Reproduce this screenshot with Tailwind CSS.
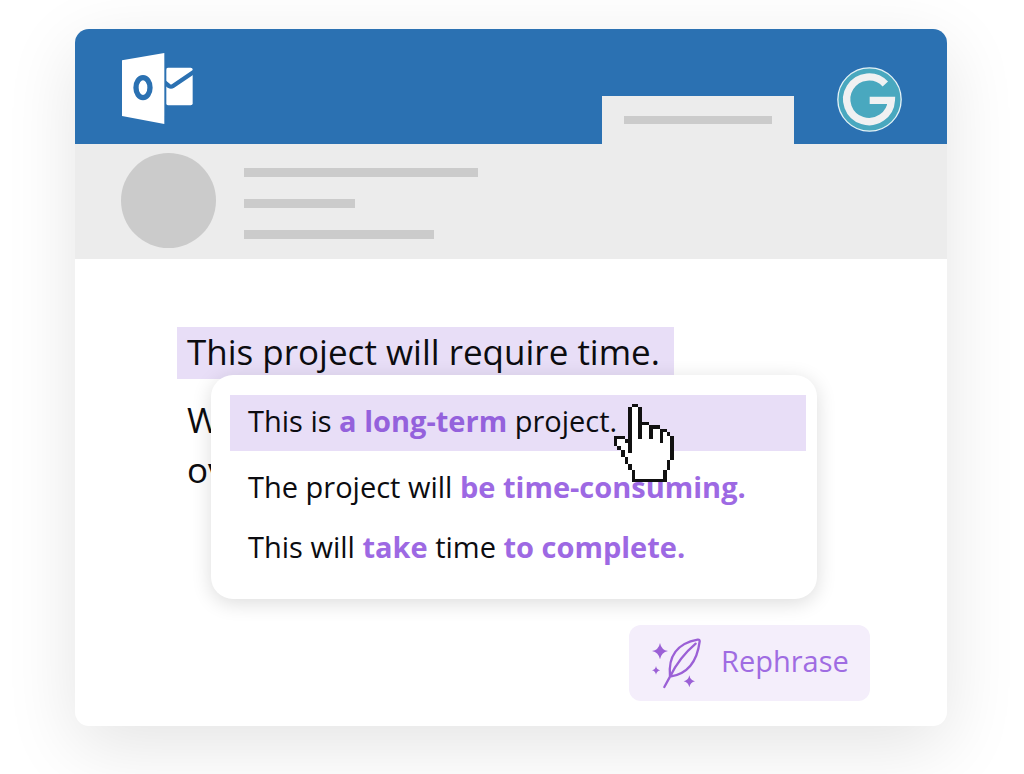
<!DOCTYPE html>
<html lang="en">
<head>
    <meta charset="UTF-8">
    <meta name="viewport" content="width=device-width, initial-scale=1.0">
    <title>Rephrase in Outlook</title>
    <script src="https://cdn.jsdelivr.net/npm/@tailwindcss/browser@4"></script>
</head>
<body class="min-h-screen overflow-x-hidden bg-white font-['Open_Sans','Noto_Sans',sans-serif] text-[#0c0c10]">
    <main class="pt-[29px] pr-[77px] pb-12 pl-[75px]">
        <div class="overflow-hidden rounded-[14px] bg-white shadow-[0_20px_72px_rgba(0,0,0,0.11)]">

            <!-- Title bar -->
            <header class="flex h-[115px] items-end bg-[#2b71b2] pr-[45px] pl-[47px]">
                <svg class="mb-5 h-[71px] w-[71px]" viewBox="0 0 213 213" role="img" aria-label="Outlook">
                    <rect x="132" y="44" width="80" height="113" rx="6" fill="#fff"/>
                    <path fill="none" stroke="#2b71b2" stroke-width="13" stroke-linejoin="round" d="M128 88 141 99Q147 103 153 99L216 56"/>
                    <path fill="#2b71b2" d="M122 22H133V190H122Z"/>
                    <path fill="#fff" d="M0 22 127 0V213L0 189Z"/>
                    <ellipse cx="63" cy="104" rx="21" ry="30" fill="none" stroke="#2b71b2" stroke-width="16"/>
                </svg>
                <div class="ml-auto h-12 w-[192px] bg-[#ececec] px-[22px] pt-5">
                    <div class="h-2 bg-[#cbcbcb]"></div>
                </div>
                <svg class="mb-3 ml-[43px] h-[65px] w-[65px]" viewBox="0 0 195 195" role="img" aria-label="Ginger">
                    <circle cx="97.5" cy="97.5" r="95" fill="#49a8bf" stroke="#e4f2f6" stroke-width="4"/>
                    <path fill="none" stroke="#f0f1f2" stroke-width="22" d="M145 51A67 67 0 1 0 163 100H98"/>
                </svg>
            </header>

            <!-- Sender -->
            <section class="flex h-[115px] items-start bg-[#ececec] pt-[9px] pl-[46px]">
                <div class="h-[95px] w-[95px] rounded-full bg-[#cbcbcb]"></div>
                <div class="ml-7 flex flex-col gap-[22px] pt-[15px]">
                    <div class="h-[9px] w-[234px] bg-[#cbcbcb]"></div>
                    <div class="h-[9px] w-[111px] bg-[#cbcbcb]"></div>
                    <div class="h-[9px] w-[190px] bg-[#cbcbcb]"></div>
                </div>
            </section>

            <!-- Message -->
            <section class="relative pt-[68px] pr-[77px] pb-[25px] pl-[102px]">
                <p class="w-fit bg-[#e8def7] pr-[14px] pb-[2px] pl-[10px] text-[35px] leading-[50px] whitespace-nowrap">This project will require time.</p>
                <div class="mt-4 pl-[10px] text-[35px] leading-[50px]">
                    <p>W</p>
                    <p>ov</p>
                </div>

                <!-- Suggestions -->
                <div class="absolute top-[116px] left-[136px] rounded-[22px] bg-white pt-5 pr-[11px] pb-6 pl-[19px] text-[29px] whitespace-nowrap shadow-[0_4px_20px_rgba(0,0,0,0.14)]">
                    <ul>
                        <li class="w-[576px] bg-[#e8def7] pb-1 pl-[18px] leading-[52px]">This is <b class="font-bold text-[#9461dc]">a long-term</b> project.</li>
                        <li class="mt-1 pl-[18px] leading-[64px]">The project will <b class="font-bold text-[#9d69e3]">be time-consuming.</b></li>
                        <li class="pl-[18px] leading-[56px]">This will <b class="font-bold text-[#9d69e3]">take</b> time <b class="font-bold text-[#9d69e3]">to complete.</b></li>
                    </ul>
                    <svg class="absolute top-[29px] left-[403px] h-[78px] w-[60px]" viewBox="41 41 180 234" shape-rendering="crispEdges" aria-hidden="true">
                        <path fill="#fff" d="M94 51H114V104H147V115H179V125H200V136H210V210H200V240H189V265H104V240H94V220H84V200H73V178H61V167H51V147H73V157H94Z"/>
                        <path fill="#111" d="M94 41H114V51H94ZM84 51H94V187H84ZM114 51H125V94H147V104H125V147H114ZM147 104H179V115H157V147H147ZM179 115H200V125H188V157H179ZM200 125H210V136H200ZM210 136H220V210H210ZM200 210H210V240H200ZM189 240H200V265H189ZM94 265H200V275H94ZM41 137H73V147H51V167H41ZM73 147H84V157H73ZM51 167H61V178H51ZM61 178H73V200H61ZM73 200H84V220H73ZM84 220H94V240H84ZM94 240H104V265H94Z"/>
                    </svg>
                </div>

                <div class="mt-[130px] flex justify-end">
                    <button type="button" class="flex h-[76px] w-[241px] items-center rounded-xl bg-[#f4eefb] pb-1 pl-[23px] text-[29px] text-[#9f6ce2]">
                        <svg class="h-[49px] w-[49px]" viewBox="97 79 147 147" overflow="visible" fill="none" stroke="#9b60d6" stroke-width="7" stroke-linecap="round" stroke-linejoin="round" aria-hidden="true">
                            <path d="M151 198C145 138 172 98 234 87Q240 86 240 92C232 156 203 190 151 198ZM134 229 151 198C168 163 196 126 228 99"/>
                            <path fill="#9b60d6" stroke="none" d="M121 97Q125 118 145 121 125 125 121 146 117 125 97 121 117 118 121 97ZM109 166Q111 177 122 179 111 181 109 192 107 181 97 179 107 177 109 166ZM209 194Q212 209 226 212 212 215 209 230 206 215 192 212 206 209 209 194Z"/>
                        </svg>
                        <span class="ml-5">Rephrase</span>
                    </button>
                </div>
            </section>
        </div>
    </main>
</body>
</html>
